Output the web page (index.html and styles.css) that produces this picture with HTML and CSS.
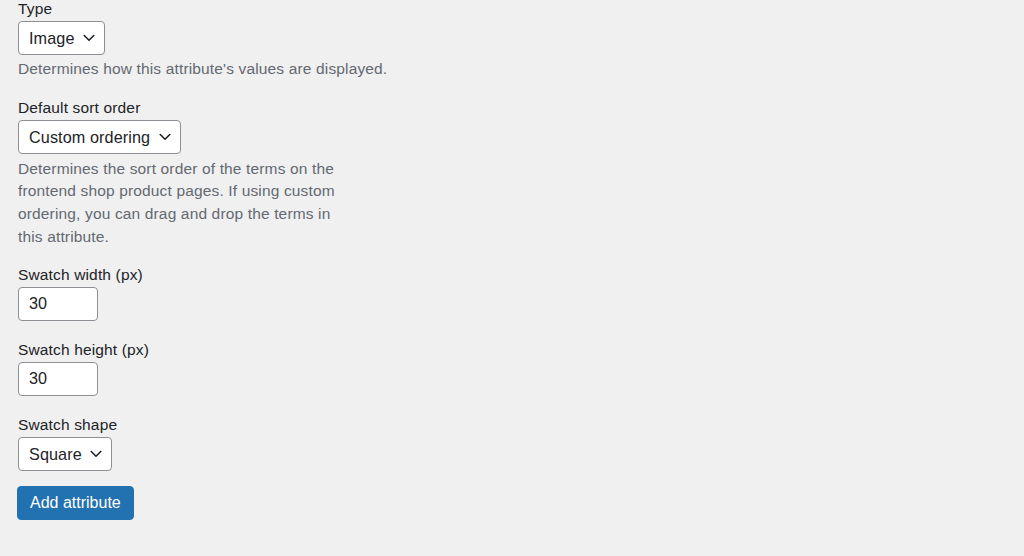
FILE: index.html
```html
<!DOCTYPE html>
<html lang="en">
<head>
    <meta charset="UTF-8">
    <meta name="viewport" content="width=device-width, initial-scale=1.0">
    <title>Add new attribute</title>
    <link rel="stylesheet" href="styles.css">
</head>
<body>

<form class="attribute-form">
    <div class="form-field">
        <label for="attribute_type">Type</label>
        <select id="attribute_type" name="attribute_type">
            <option>Image</option>
        </select>
        <p class="description">Determines how this attribute's values are displayed.</p>
    </div>

    <div class="form-field">
        <label for="attribute_orderby">Default sort order</label>
        <select id="attribute_orderby" name="attribute_orderby">
            <option>Custom ordering</option>
        </select>
        <p class="description narrow">Determines the sort order of the terms on the frontend shop product pages. If using custom ordering, you can drag and drop the terms in this attribute.</p>
    </div>

    <div class="form-field plain">
        <label for="swatch_width">Swatch width (px)</label>
        <input type="text" id="swatch_width" name="swatch_width" value="30">
    </div>

    <div class="form-field plain">
        <label for="swatch_height">Swatch height (px)</label>
        <input type="text" id="swatch_height" name="swatch_height" value="30">
    </div>

    <div class="form-field plain">
        <label for="swatch_shape">Swatch shape</label>
        <select id="swatch_shape" name="swatch_shape">
            <option>Square</option>
        </select>
    </div>

    <button type="submit" class="button-primary">Add attribute</button>
</form>

</body>
</html>
```

FILE: styles.css
```css
body {
    font-family: "Liberation Sans", Arial, sans-serif;
    background-color: #f0f0f1;
    color: #1d2327;
    margin: 0;
    padding: 0 0 0 18px;
}
.attribute-form {
    display: flex;
    flex-direction: column;
    align-items: flex-start;
}
.form-field {
    display: flex;
    flex-direction: column;
    align-items: flex-start;
    margin-bottom: 18px;
}
.form-field.plain {
    margin-bottom: 20px;
}
label {
    display: block;
    font-size: 15.5px;
    letter-spacing: 0.15px;
    line-height: 18px;
    margin-bottom: 3px;
}
select, input[type="text"] {
    font-family: inherit;
    font-size: 16.2px;
    letter-spacing: 0.1px;
    color: #1d2327;
    height: 34px;
    border: 1px solid #8c8f94;
    border-radius: 4px;
    background-color: #fff;
    box-sizing: border-box;
    margin: 0;
}
select {
    appearance: none;
    -webkit-appearance: none;
    padding: 0 29px 0 10px;
    background-image: url("data:image/svg+xml,%3Csvg xmlns='http://www.w3.org/2000/svg' width='12' height='8' viewBox='0 0 12 8'%3E%3Cpath d='M1.2 1.5 6 6.2l4.8-4.7' fill='none' stroke='%231d2327' stroke-width='1.6' stroke-linecap='round' stroke-linejoin='round'/%3E%3C/svg%3E");
    background-repeat: no-repeat;
    background-position: right 9px center;
    background-size: 12px 8px;
}
input[type="text"] {
    width: 80px;
    padding: 0 10px;
}
.description {
    margin: 3px 0 0;
    font-size: 15.5px;
    letter-spacing: 0.15px;
    line-height: 22.6px;
    color: #646970;
    white-space: nowrap;
}
.description.narrow {
    margin: 4px 0 -1px;
    line-height: 22.8px;
    white-space: normal;
    max-width: 340px;
}
.button-primary {
    font-family: inherit;
    font-size: 16px;
    height: 34px;
    padding: 0 12px;
    margin: -5px 0 0 -1px;
    color: #fff;
    background-color: #2271b1;
    border: 1px solid #2271b1;
    border-radius: 4px;
    cursor: pointer;
}
```
